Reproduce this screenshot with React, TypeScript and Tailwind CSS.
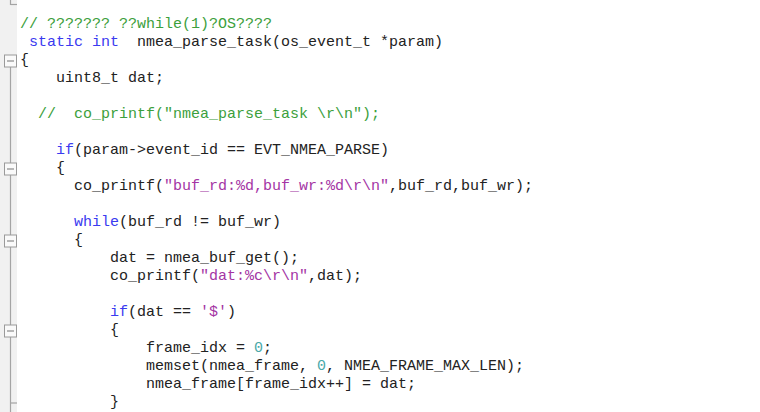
import React from "react";

type Tok = [string, string?];

const K = "text-[#3a3af0]";
const C = "text-[#3ca03c]";
const S = "text-[#a435a4]";
const N = "text-[#4aa8a8]";

const lines: Tok[][] = [
  [["// ??????? ??while(1)?OS????", C]],
  [[" "], ["static", K], [" "], ["int", K], ["  nmea_parse_task(os_event_t *param)"]],
  [["{"]],
  [["    uint8_t dat;"]],
  [[""]],
  [["  //  co_printf(\"nmea_parse_task \\r\\n\");", C]],
  [[""]],
  [["    "], ["if", K], ["(param->event_id == EVT_NMEA_PARSE)"]],
  [["    {"]],
  [["      co_printf("], ["\"buf_rd:%d,buf_wr:%d\\r\\n\"", S], [",buf_rd,buf_wr);"]],
  [[""]],
  [["      "], ["while", K], ["(buf_rd != buf_wr)"]],
  [["      {"]],
  [["          dat = nmea_buf_get();"]],
  [["          co_printf("], ["\"dat:%c\\r\\n\"", S], [",dat);"]],
  [[""]],
  [["          "], ["if", K], ["(dat == "], ["'$'", S], [")"]],
  [["          {"]],
  [["              frame_idx = "], ["0", N], [";"]],
  [["              memset(nmea_frame, "], ["0", N], [", NMEA_FRAME_MAX_LEN);"]],
  [["              nmea_frame[frame_idx++] = dat;"]],
  [["          }"]],
];

const boxes = [2, 8, 12, 17];

function Gutter() {
  const top = 16;
  const lh = 18;
  const cy = (i: number) => top + lh * i + 9;
  return (
    <svg width="17" height="412" className="block">
      <rect x="0" y="0" width="17" height="412" fill="#f1f1f1" />
      <line x1="10.5" y1="0" x2="10.5" y2="5" stroke="#a4a4a4" strokeWidth="1.2" />
      <line x1="10.5" y1="4.5" x2="17" y2="4.5" stroke="#a4a4a4" strokeWidth="1.2" />
      <line x1="10.5" y1={cy(2)} x2="10.5" y2="412" stroke="#a4a4a4" strokeWidth="1.2" />
      <line x1="10.5" y1={cy(21)} x2="17" y2={cy(21)} stroke="#a4a4a4" strokeWidth="1.2" />
      {boxes.map((i) => (
        <g key={i}>
          <rect x="4.5" y={cy(i) - 6} width="12" height="12" fill="#fafafa" stroke="#9a9a9a" strokeWidth="1" />
          <line x1="7" y1={cy(i)} x2="14" y2={cy(i)} stroke="#8a8a8a" strokeWidth="1.2" />
        </g>
      ))}
    </svg>
  );
}

export default function App() {
  return (
    <div className="w-[760px] h-[412px] overflow-hidden bg-white flex">
      <Gutter />
      <div
        className="pt-[16px] pl-[3px] text-[15px] leading-[18px] text-[#222]"
        style={{ fontFamily: '"Liberation Mono", "Courier New", monospace' }}
      >
        {lines.map((l, i) => (
          <div key={i} className="h-[18px] whitespace-pre">
            {l.map((t, j) => (
              <span key={j} className={t[1]}>
                {t[0]}
              </span>
            ))}
          </div>
        ))}
      </div>
    </div>
  );
}
